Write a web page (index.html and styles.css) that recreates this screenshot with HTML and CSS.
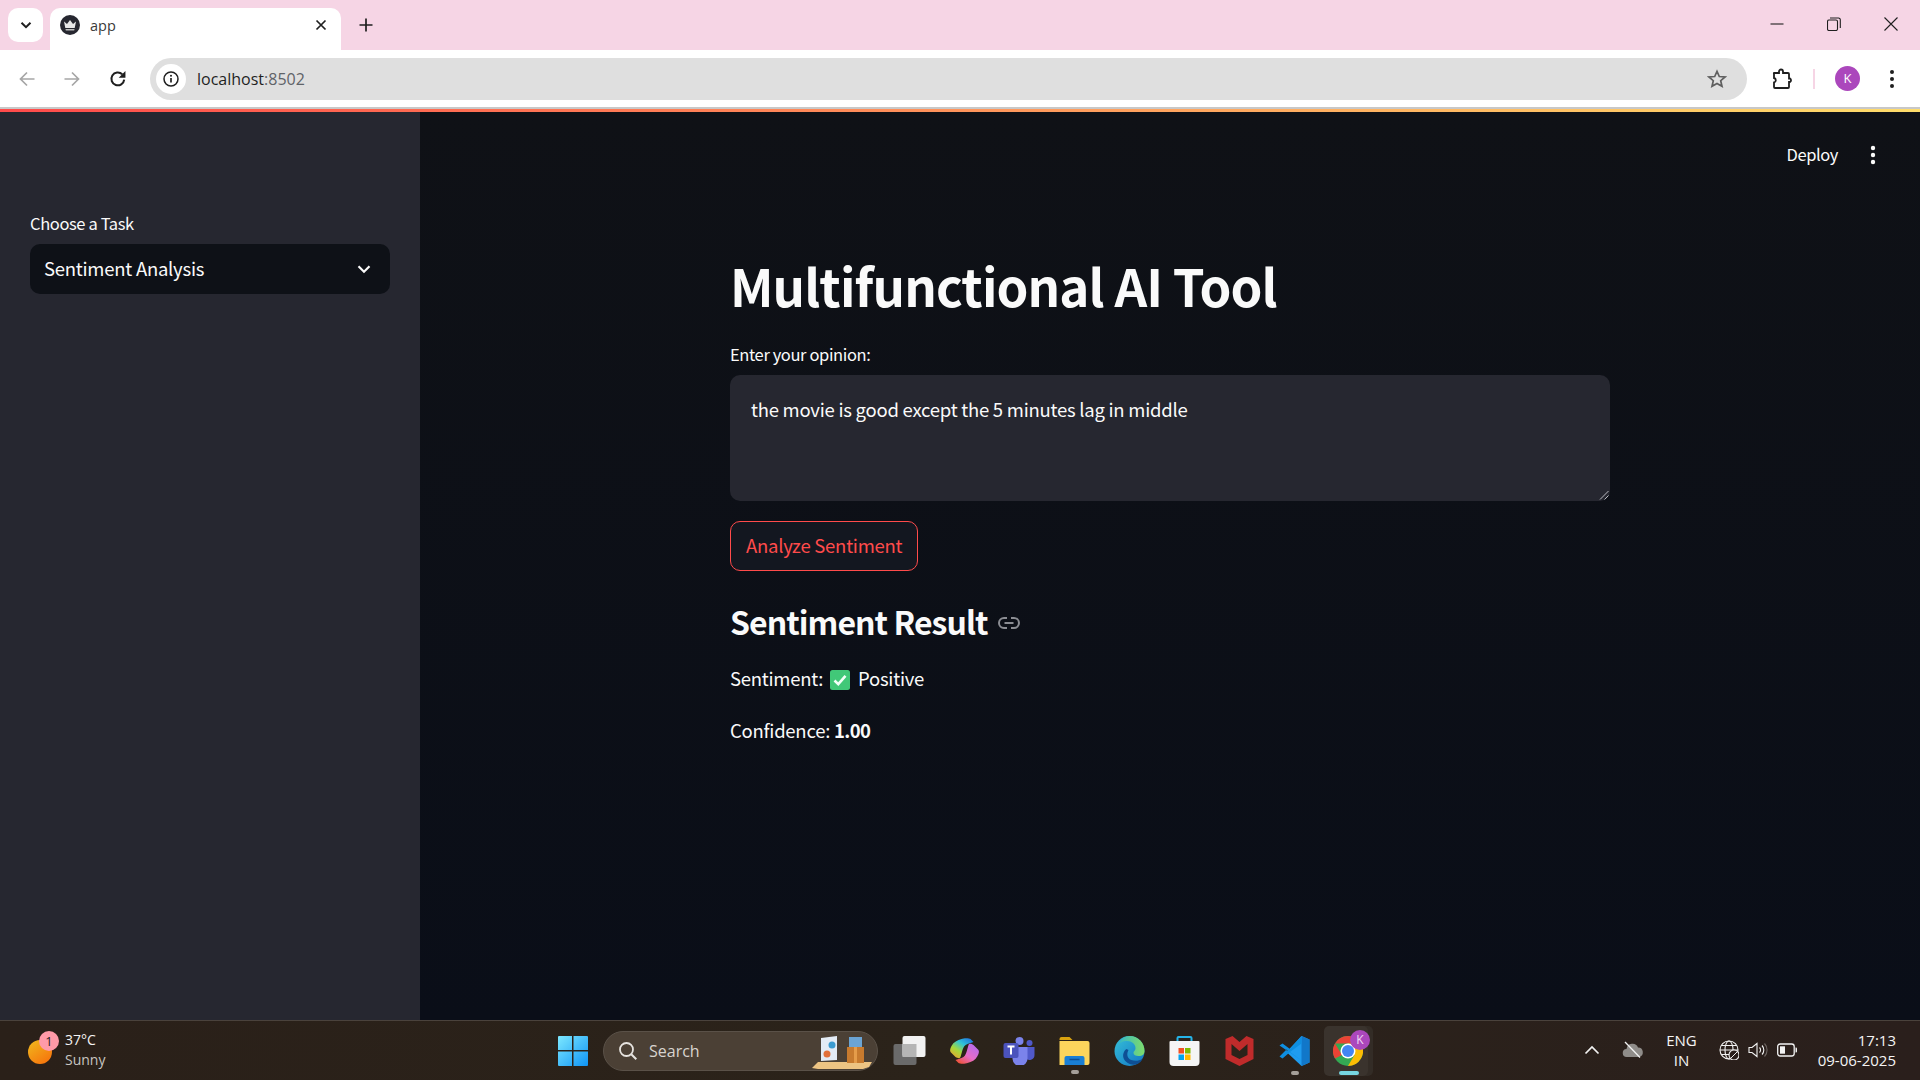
FILE: index.html
```html
<!DOCTYPE html>
<html lang="en">
<head>
  <meta charset="UTF-8">
  <title>app</title>
  <link rel="stylesheet" href="styles.css">
</head>
<body>
  <div class="tabstrip">
    <button class="tab-search">
      <svg width="14" height="14" viewBox="0 0 14 14"><path d="M2.500 4.800 7 9.200l4.500-4.400" fill="none" stroke="#1f1f1f" stroke-width="2"/></svg>
    </button>
    <div class="tab">
      <svg class="favicon" width="20" height="20" viewBox="0 0 20 20"><circle cx="10" cy="10" r="10" fill="#262730"/><path d="M4 6.500 7 9l3-4 3 4 3-2.500-1.300 6.500H5.300z" fill="#e8e8e8"/><path d="M5.500 14h9l-.3 1.500H5.800z" fill="#bdbdbd"/></svg>
      <span class="tab-title">app</span>
      <svg class="tab-close" width="12" height="12" viewBox="0 0 12 12"><path d="M1.500 1.500l9 9M10.500 1.500l-9 9" stroke="#1f1f1f" stroke-width="1.700"/></svg>
    </div>
    <svg class="new-tab" width="14" height="14" viewBox="0 0 14 14"><path d="M7 .5v13M.5 7h13" stroke="#1f1f1f" stroke-width="1.700"/></svg>
    <div class="win-buttons">
      <svg width="14" height="14" viewBox="0 0 14 14"><path d="M.5 7h13" stroke="#1f1f1f" stroke-width="1.100"/></svg>
      <svg width="14" height="14" viewBox="0 0 14 14"><rect x=".5" y="3" width="10" height="10.500" rx="1.500" fill="none" stroke="#1f1f1f" stroke-width="1.100"/><path d="M3 1h8.500A1.800 1.800 0 0 1 13.300 3v8" fill="none" stroke="#1f1f1f" stroke-width="1.100"/></svg>
      <svg width="14" height="14" viewBox="0 0 14 14"><path d="M.5.500l13 13M13.500.5l-13 13" stroke="#1f1f1f" stroke-width="1.100"/></svg>
    </div>
  </div>

  <div class="toolbar">
    <svg class="nav-icon" width="16" height="16" viewBox="0 0 16 16"><path d="M15.500 8H1.500M8 1.500 1.500 8 8 14.500" fill="none" stroke="#a6a6a6" stroke-width="1.700"/></svg>
    <svg class="nav-icon" width="16" height="16" viewBox="0 0 16 16"><path d="M.5 8h14M8 1.500 14.500 8 8 14.500" fill="none" stroke="#a6a6a6" stroke-width="1.700"/></svg>
    <svg class="nav-icon" width="18" height="18" viewBox="0 0 16 16"><path d="M13.500 8.500A5.700 5.700 0 1 1 11.800 3.800" fill="none" stroke="#1f1f1f" stroke-width="1.800"/><path d="M14.600.8v6h-6z" fill="#1f1f1f"/></svg>
    <div class="omnibox">
      <span class="site-info">
        <svg width="16" height="16" viewBox="0 0 16 16"><circle cx="8" cy="8" r="7" fill="none" stroke="#1f1f1f" stroke-width="1.500"/><path d="M8 7v4.500" stroke="#1f1f1f" stroke-width="1.700"/><circle cx="8" cy="4.800" r="1" fill="#1f1f1f"/></svg>
      </span>
      <span class="url">localhost<span class="url-port">:8502</span></span>
      <svg class="star" width="20" height="20" viewBox="0 0 20 20"><path d="M10 2.300l2.300 5.200 5.700.5-4.300 3.700 1.300 5.600L10 14.400l-5 2.900 1.300-5.600L2 8l5.700-.5z" fill="none" stroke="#5f5f5f" stroke-width="1.700"/></svg>
    </div>
    <svg class="ext-icon" width="22" height="22" viewBox="0 0 22 22"><path d="M3 5h5V3.500a2 2 0 0 1 4 0V5h5a1 1 0 0 1 1 1v4.500h1a2 2 0 0 1 0 3.500h-1v5a1 1 0 0 1-1 1H4a1 1 0 0 1-1-1v-4.500a2.300 2.300 0 0 0 0-4.500V6a1 1 0 0 1 0-1z" fill="none" stroke="#1f1f1f" stroke-width="1.800"/></svg>
    <span class="toolbar-sep"></span>
    <span class="avatar">K</span>
    <svg class="chrome-menu" width="6" height="20" viewBox="0 0 6 20"><circle cx="3" cy="3" r="2" fill="#1f1f1f"/><circle cx="3" cy="10" r="2" fill="#1f1f1f"/><circle cx="3" cy="17" r="2" fill="#1f1f1f"/></svg>
  </div>
  <div class="load-line"></div>

  <div class="app">
    <aside class="sidebar">
      <label class="field-label">Choose a Task</label>
      <div class="select">
        <span class="select-value">Sentiment Analysis</span>
        <svg width="16" height="16" viewBox="0 0 16 16"><path d="M2.500 5.300 8 10.700l5.500-5.400" fill="none" stroke="#fafafa" stroke-width="2.200"/></svg>
      </div>
    </aside>
    <main class="main">
      <div class="app-header">
        <span class="deploy">Deploy</span>
        <svg width="6" height="20" viewBox="0 0 6 20"><circle cx="3" cy="3" r="2.200" fill="#fafafa"/><circle cx="3" cy="10" r="2.200" fill="#fafafa"/><circle cx="3" cy="17" r="2.200" fill="#fafafa"/></svg>
      </div>
      <div class="block">
        <h1>Multifunctional AI Tool</h1>
        <label class="field-label">Enter your opinion:</label>
        <div class="textarea">the movie is good except the 5 minutes lag in middle
          <svg class="resize" width="10" height="10" viewBox="0 0 10 10"><path d="M9.500 1 1 9.500M9.500 5.500 5.500 9.500" stroke="#b9bac0" stroke-width="1"/></svg>
        </div>
        <button class="analyze"><span class="analyze-text">Analyze Sentiment</span></button>
        <h3>Sentiment Result
          <svg class="anchor" width="24" height="14" viewBox="0 0 24 14"><path d="M10 2H7a5 5 0 0 0 0 10h3M14 2h3a5 5 0 0 1 0 10h-3M7.500 7h9" fill="none" stroke="#8b8d93" stroke-width="2"/></svg>
        </h3>
        <p class="line">Sentiment:
          <svg class="check" width="20" height="20" viewBox="0 0 20 20"><rect width="20" height="20" rx="2.500" fill="#41c878"/><path d="M4.500 10.500l3.800 3.700 7.200-8.400" fill="none" stroke="#f2fff7" stroke-width="2.600"/></svg>
          Positive</p>
        <p class="line">Confidence: <strong>1.00</strong></p>
      </div>
    </main>
  </div>

  <footer class="taskbar">
    <div class="weather">
      <span class="sun"><span class="sun-badge">1</span></span>
      <div class="weather-text">
        <div>37°C</div>
        <div class="weather-sub">Sunny</div>
      </div>
    </div>

    <div class="task-icons">
      <svg class="start" width="30" height="30" viewBox="0 0 30 30">
        <defs><linearGradient id="win" x1="0" y1="0" x2="1" y2="1"><stop offset="0" stop-color="#7de8ff"/><stop offset="1" stop-color="#0f94f5"/></linearGradient></defs>
        <path d="M1 0h13v14H0V1a1 1 0 0 1 1-1zM15.500 0H29a1 1 0 0 1 1 1v13H15.500zM0 15.500h14V30H1a1 1 0 0 1-1-1zM15.500 15.500H30V29a1 1 0 0 1-1 1H15.500z" fill="url(#win)"/>
      </svg>
      <div class="search">
        <svg width="20" height="20" viewBox="0 0 20 20"><circle cx="8.500" cy="8.500" r="6.500" fill="none" stroke="#e6e3df" stroke-width="1.800"/><path d="M13.300 13.300l5 5" stroke="#e6e3df" stroke-width="2"/></svg>
        <span>Search</span>
        <svg class="search-art" width="62" height="34" viewBox="0 0 62 34">
          <path d="M2 33l6-6h54l-3 5-6 2H8z" fill="#edc483"/>
          <path d="M11 3l16-2v24l-16 1z" fill="#e3ebf5"/>
          <circle cx="22" cy="10" r="3.500" fill="#3b9bd0"/>
          <circle cx="17" cy="19" r="3.500" fill="#e2703a"/>
          <rect x="37" y="12" width="17" height="16" fill="#c77a2e"/>
          <rect x="44" y="12" width="3" height="16" fill="#e59c4a"/>
          <rect x="39" y="2" width="13" height="10" fill="#6ba4d4"/>
        </svg>
      </div>
      <svg class="task-icon" width="32" height="30" viewBox="0 0 32 30"><rect y="8" width="23" height="21" rx="2" fill="#6a6a6a"/><rect x="9" y="0" width="23" height="21" rx="2" fill="#f2f2f2"/><rect x="9" y="8" width="14" height="13" fill="#b5b5b5"/></svg>
      <svg class="task-icon" width="30" height="26" viewBox="0 0 30 26">
        <defs>
          <linearGradient id="cop1" x1=".9" y1="0" x2=".1" y2="1"><stop offset="0" stop-color="#1f6fe0"/><stop offset=".35" stop-color="#2fc3d8"/><stop offset=".65" stop-color="#a5d83a"/><stop offset="1" stop-color="#f0a030"/></linearGradient>
          <linearGradient id="cop2" x1=".9" y1="0" x2=".1" y2="1"><stop offset="0" stop-color="#b06cf0"/><stop offset=".55" stop-color="#e66cc8"/><stop offset="1" stop-color="#f0502a"/></linearGradient>
        </defs>
        <path d="M12 1C14 0 20 0 21 1l3 3-6 2c-3 1-4 3-5 6l-2 7c-1 2-3 1-5 0l-5-5c-1-2 0-4 1-6 2-4 6-6 10-7z" fill="url(#cop1)"/>
        <path d="M18 25c-2 1-8 1-9 0l-3-3 6-2c3-1 4-3 5-6l2-7c1-2 3-1 5 0l5 5c1 2 0 4-1 6-2 4-6 6-10 7z" fill="url(#cop2)"/>
      </svg>
      <svg class="task-icon" width="32" height="28" viewBox="0 0 32 28">
        <circle cx="16" cy="4" r="4" fill="#7b83eb"/><circle cx="26" cy="6" r="3" fill="#5059c9"/>
        <path d="M21 10h10v8a5 5 0 0 1-9 3z" fill="#5059c9"/>
        <path d="M9 10h15v11a7 7 0 0 1-15 1z" fill="#7b83eb"/>
        <rect y="6" width="15" height="15" rx="2" fill="#4b53bc"/>
        <path d="M4 9.500h7M7.500 9.500v8" stroke="#fff" stroke-width="2"/>
      </svg>
      <span class="running">
        <svg class="task-icon" width="30" height="28" viewBox="0 0 30 28">
          <path d="M0 2a2 2 0 0 1 2-2h8l3 3h-13z" fill="#d9a20f"/>
          <path d="M0 4h28a2 2 0 0 1 2 2v20a2 2 0 0 1-2 2H0z" fill="#fcd55c"/>
          <path d="M5 28v-7a2 2 0 0 1 2-2h16a2 2 0 0 1 2 2v7z" fill="#1a7fd4"/>
          <path d="M10 22.500h10" stroke="#0c4f94" stroke-width="1.500"/>
        </svg>
      </span>
      <svg class="task-icon" width="30" height="30" viewBox="0 0 30 30">
        <defs>
          <linearGradient id="edge1" x1="0" y1="0" x2="1" y2="1"><stop offset="0" stop-color="#36c0d8"/><stop offset="1" stop-color="#1175c4"/></linearGradient>
          <linearGradient id="edge2" x1="0" y1="0" x2="1" y2="0"><stop offset="0" stop-color="#33b6c8"/><stop offset="1" stop-color="#7fdc6a"/></linearGradient>
        </defs>
        <circle cx="15" cy="15" r="15" fill="url(#edge1)"/>
        <path d="M3 10C6 3 11 0 15 0c9 0 15 7 15 15 0 3-2 5-6 5-3 0-5-1-5-3 0-2 2-2 2-5 0-4-4-7-8-7-5 0-9 2-10 5z" fill="url(#edge2)"/>
        <path d="M12 13c-3 2-4 6-3 9 2 5 8 8 14 6 2-1 4-3 5-5-5 3-12 2-14-1-2-3-1-6 0-8z" fill="#0e4f94"/>
      </svg>
      <svg class="task-icon" width="30" height="30" viewBox="0 0 30 30">
        <path d="M8 6V2a1 1 0 0 1 1-1h12a1 1 0 0 1 1 1v4" fill="none" stroke="#25b4e8" stroke-width="2"/>
        <path d="M1 5h28a1 1 0 0 1 1 1v20a4 4 0 0 1-4 4H4a4 4 0 0 1-4-4V6a1 1 0 0 1 1-1z" fill="#f5f5f5"/>
        <rect x="9" y="12" width="5.500" height="5.500" fill="#f25022"/><rect x="15.500" y="12" width="5.500" height="5.500" fill="#7fba00"/>
        <rect x="9" y="18.500" width="5.500" height="5.500" fill="#00a4ef"/><rect x="15.500" y="18.500" width="5.500" height="5.500" fill="#ffb900"/>
      </svg>
      <svg class="task-icon" width="28" height="30" viewBox="0 0 28 30"><path d="M0 3l7-3 7 6 7-6 7 3v20l-14 7-14-7z" fill="#c02b2b"/><path d="M6 8l8 7 8-7v11l-8 4-8-4z" fill="#2b231a"/></svg>
      <span class="running">
        <svg class="task-icon" width="30" height="30" viewBox="0 0 30 30">
          <path d="M22 0l8 3.500v23L22 30 7 16z" fill="#1f9cf0"/>
          <path d="M22 0v30l8-3.500v-23z" fill="#1177c9"/>
          <path d="M22 7.500 10.500 16 22 24.500 0 9.500l3-2L10.500 13 22 0v7.500zM0 20.500l3 2 7-6-3-3z" fill="#0e8ee0"/>
        </svg>
      </span>
      <span class="active-app">
        <svg width="30" height="30" viewBox="0 0 30 30">
          <circle cx="15" cy="15" r="15" fill="#34a853"/>
          <path d="M15 0a15 15 0 0 1 13 7.500H15z M2 7.500A15 15 0 0 1 15 0v7.500z M2 7.500 9 19 2 22.500A15 15 0 0 1 2 7.500z" fill="#ea4335"/>
          <path d="M28 7.500A15 15 0 0 1 15 30l6.500-11L15 7.500z" fill="#fbbc04"/>
          <circle cx="15" cy="15" r="7.500" fill="#fff"/><circle cx="15" cy="15" r="6" fill="#4285f4"/>
        </svg>
        <span class="chrome-badge">K</span>
        <span class="active-pill"></span>
      </span>
    </div>

    <div class="tray">
      <svg width="16" height="10" viewBox="0 0 16 10"><path d="M1.500 8.500 8 2l6.500 6.500" fill="none" stroke="#f2f2f2" stroke-width="1.700"/></svg>
      <svg class="tray-cloud" width="22" height="18" viewBox="0 0 22 18"><path d="M5 16a4 4 0 0 1-.5-8A6 6 0 0 1 16 6.500a4.800 4.800 0 0 1 1 9.500z" fill="#8f8c89"/><path d="M3 1l15 15.500" stroke="#f2f2f2" stroke-width="1.300"/></svg>
      <div class="lang">ENG<br>IN</div>
      <div class="tray-status">
        <svg width="20" height="20" viewBox="0 0 20 20"><g fill="none" stroke="#f2f2f2" stroke-width="1.100"><circle cx="10" cy="10" r="9"/><ellipse cx="10" cy="10" rx="4" ry="9"/><path d="M1 10h18M2.500 5.500h15M2.500 14.500h15"/></g><circle cx="15" cy="15" r="5" fill="#2a1f1c" stroke="#f2f2f2" stroke-width="1.100"/><path d="M12 18l6-6" stroke="#f2f2f2"/></svg>
        <svg width="20" height="16" viewBox="0 0 20 16"><path d="M1 5.500h3L9 1.500v13l-5-4H1z" fill="none" stroke="#f2f2f2" stroke-width="1.100"/><path d="M11.500 5.500a3.500 3.500 0 0 1 0 5M14 3.500a6.500 6.500 0 0 1 0 9" fill="none" stroke="#f2f2f2" stroke-width="1.100"/><path d="M16.500 1.500a9.500 9.500 0 0 1 0 13" fill="none" stroke="#6d6562" stroke-width="1.100"/></svg>
        <svg width="20" height="14" viewBox="0 0 20 14"><rect x=".7" y="1" width="16.500" height="12" rx="2.500" fill="none" stroke="#f2f2f2" stroke-width="1.300"/><rect x="3" y="3.300" width="5" height="7.400" fill="#f2f2f2"/><path d="M18.500 4.500h.5a1 1 0 0 1 1 1v3a1 1 0 0 1-1 1h-.5z" fill="#f2f2f2"/></svg>
      </div>
      <div class="clock">17:13<br>09-06-2025</div>
    </div>
  </footer>
</body>
</html>
```

FILE: styles.css
```css
* {
  box-sizing: border-box;
}

html, body {
  margin: 0;
  height: 100%;
}

body {
  width: 1920px;
  height: 1080px;
  display: flex;
  flex-direction: column;
  overflow: hidden;
  font-family: "Noto Sans CJK SC", "Noto Sans", sans-serif;
  color: #fafafa;
}

svg {
  display: block;
  flex: none;
}

/* browser chrome */
.tabstrip {
  height: 50px;
  flex: none;
  display: flex;
  align-items: flex-start;
  background: #f6d5e5;
}

.tab-search {
  width: 35px;
  height: 34px;
  margin: 8px 0 0 8px;
  padding: 0;
  border: 0;
  border-radius: 10px;
  background: #fff;
  display: flex;
  align-items: center;
  justify-content: center;
}

.tab {
  width: 291px;
  height: 42px;
  margin: 8px 0 0 7px;
  padding: 0 14px 8px 10px;
  border-radius: 10px 10px 0 0;
  background: #fff;
  display: flex;
  align-items: center;
  font-family: "Open Sans", sans-serif;
  font-size: 14.5px;
  color: #3b3b3b;
}

.tab-title {
  margin-left: 10px;
  flex: 1;
}

.new-tab {
  margin: 18px 0 0 18px;
}

.win-buttons {
  margin: 17px 22px 0 auto;
  display: flex;
  gap: 43px;
}

.toolbar {
  height: 57px;
  flex: none;
  display: flex;
  align-items: center;
  padding: 0 0 0 19px;
  background: #fff;
  border-radius: 10px 10px 0 0;
}

.nav-icon {
  margin-right: 29px;
}

.omnibox {
  width: 1597px;
  height: 42px;
  margin-left: -6px;
  padding: 0 20px 0 6px;
  border-radius: 21px;
  background: #dfdfdf;
  display: flex;
  align-items: center;
}

.site-info {
  width: 30px;
  height: 30px;
  border-radius: 50%;
  background: #fff;
  display: flex;
  align-items: center;
  justify-content: center;
}

.url {
  margin-left: 11px;
  flex: 1;
  font-family: "Open Sans", sans-serif;
  font-size: 16px;
  color: #1f1f1f;
}

.url-port {
  color: #5f6368;
}

.ext-icon {
  margin-left: 24px;
}

.toolbar-sep {
  width: 2px;
  height: 20px;
  margin-left: 20px;
  background: #f6d5e5;
}

.avatar {
  width: 25px;
  height: 25px;
  margin-left: 20px;
  border-radius: 50%;
  background: #ab47bc;
  color: #fff;
  font-family: "Open Sans", sans-serif;
  font-size: 13px;
  line-height: 25px;
  text-align: center;
}

.chrome-menu {
  margin-left: 29px;
}

.load-line {
  height: 5px;
  flex: none;
  border-top: 2px solid #c8c8c8;
  background: linear-gradient(90deg, #ff4b4b, #ffdd6b 100%);
  background-clip: padding-box;
}

/* streamlit app */
.app {
  flex: 1;
  display: flex;
  min-height: 0;
}

.sidebar {
  width: 420px;
  flex: none;
  padding: 99px 30px 0;
  background: #262730;
}

.field-label {
  display: block;
  font-size: 16.5px;
  letter-spacing: -0.38px;
  line-height: 25px;
  margin-bottom: 8px;
}

.select {
  height: 50px;
  padding: 0 18px 0 14px;
  border-radius: 10px;
  background: #0e1117;
  display: flex;
  align-items: center;
  justify-content: space-between;
  font-size: 18.5px;
  letter-spacing: -0.25px;
}

.select-value {
  margin-bottom: 2px;
}

.main {
  flex: 1;
  position: relative;
  background: linear-gradient(180deg, #0f1116, #0a0e18);
}

.app-header {
  position: absolute;
  top: 30px;
  right: 44px;
  display: flex;
  align-items: center;
  gap: 32px;
  font-size: 16.5px;
  letter-spacing: -0.4px;
}

.deploy {
  margin-bottom: 2px;
}

.block {
  width: 880px;
  margin: 0 auto;
  padding-top: 140px;
}

h1 {
  margin: 0 0 24px;
  font-size: 51px;
  font-weight: 700;
  letter-spacing: -0.9px;
  line-height: 66px;
}

.textarea {
  height: 126px;
  padding: 20px 21px;
  border-radius: 10px;
  background: #262730;
  font-size: 18.5px;
  letter-spacing: -0.25px;
  line-height: 28px;
  position: relative;
}

.resize {
  position: absolute;
  right: 1px;
  bottom: 1px;
}

.analyze {
  display: block;
  height: 50px;
  margin-top: 20px;
  padding: 0 15px;
  border: 1px solid #ff4b4b;
  border-radius: 10px;
  background: #131720;
  color: #ff4b4b;
  font-family: inherit;
  font-size: 18.5px;
  letter-spacing: -0.25px;
}

.analyze-text {
  display: block;
  margin-bottom: 2px;
}

h3 {
  margin: 28px 0 0;
  display: flex;
  align-items: center;
  gap: 9px;
  font-size: 32px;
  font-weight: 600;
  letter-spacing: -0.95px;
  line-height: 44px;
}

.anchor {
  margin-top: 4px;
}

.line {
  margin: 20px 0 0;
  font-size: 18.5px;
  letter-spacing: -0.25px;
  line-height: 32px;
}

h3 + .line {
  margin-top: 19px;
}

.line strong {
  letter-spacing: -0.6px;
}

.check {
  display: inline-block;
  margin: 0 4px 0 3px;
  vertical-align: -4px;
}

/* windows taskbar */
.taskbar {
  height: 60px;
  flex: none;
  display: flex;
  align-items: center;
  border-top: 1px solid #4a423c;
  background: linear-gradient(90deg, #2a2019, #2b231a 50%, #2a1f1c);
  font-family: "Open Sans", sans-serif;
  color: #f4f4f4;
}

.weather {
  width: 557px;
  flex: none;
  padding: 0 0 2px 28px;
  display: flex;
  align-items: center;
  gap: 13px;
  font-size: 14px;
  line-height: 20px;
}

.sun {
  width: 24px;
  height: 24px;
  margin-top: 4px;
  border-radius: 50%;
  background: linear-gradient(145deg, #f0bb1e, #f76c0a);
  position: relative;
}

.sun-badge {
  position: absolute;
  top: -9px;
  left: 11px;
  width: 20px;
  height: 20px;
  border-radius: 50%;
  background: #ff9aa8;
  color: #2b1f1c;
  font-size: 13px;
  text-align: center;
}

.weather-sub {
  color: #c8c5c1;
}

.task-icons {
  display: flex;
  align-items: center;
}

.start {
  margin-left: 1px;
}

.search {
  width: 275px;
  height: 40px;
  margin: 0 4px 0 15px;
  padding: 0 2px 0 14px;
  border: 1px solid #5a5148;
  border-radius: 20px;
  background: #4b4035;
  display: flex;
  align-items: center;
  gap: 11px;
  font-size: 16px;
  color: #d8d4cf;
  position: relative;
}

.search-art {
  position: absolute;
  right: 5px;
  bottom: 1px;
}

.task-icon {
  width: 55px;
}

.running {
  position: relative;
}

.running::after {
  content: "";
  position: absolute;
  left: 24px;
  bottom: -9px;
  width: 8px;
  height: 4px;
  border-radius: 2px;
  background: #a59f99;
}

.active-app {
  width: 44px;
  height: 50px;
  margin-left: 2px;
  padding-left: 4px;
  border-radius: 5px;
  background: #3a332d;
  box-shadow: 5px 0 0 #332c26;
  display: flex;
  align-items: center;
  justify-content: center;
  position: relative;
}

.chrome-badge {
  position: absolute;
  top: 4px;
  right: -2px;
  width: 20px;
  height: 20px;
  border-radius: 50%;
  background: #ab47bc;
  color: #f0d8f4;
  font-size: 12px;
  line-height: 20px;
  text-align: center;
}

.active-pill {
  position: absolute;
  left: 15px;
  bottom: 1px;
  width: 20px;
  height: 4px;
  border-radius: 2px;
  background: #76d5e0;
}

.tray {
  margin-left: auto;
  padding: 0 24px 2px 0;
  display: flex;
  align-items: center;
  font-size: 15px;
  line-height: 20px;
}

.tray-cloud {
  margin-left: 22px;
}

.lang {
  margin-left: 22px;
  text-align: center;
}

.tray-status {
  margin-left: 22px;
  display: flex;
  align-items: center;
  gap: 9px;
}

.clock {
  margin-left: 21px;
  text-align: right;
}
```
